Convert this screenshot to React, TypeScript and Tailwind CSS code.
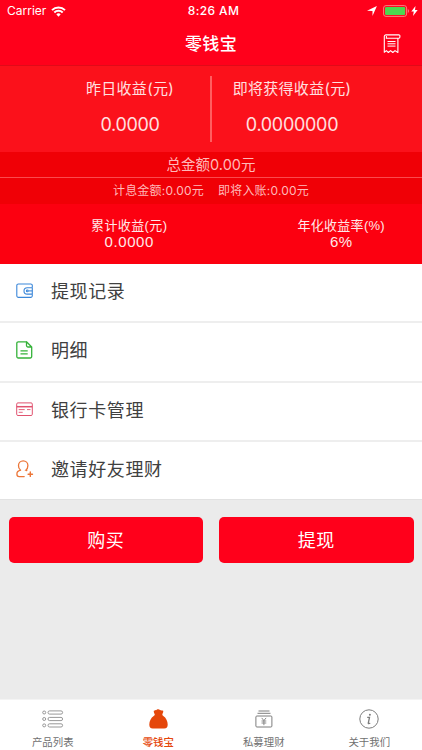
import type { ReactNode } from 'react';

const WalletIcon = () => (
  <svg width="18" height="16" viewBox="0 0 18 16" fill="none" stroke="#3b87d9" strokeWidth="1.1">
    <path d="M16.3 4.6V2.6a1.6 1.6 0 0 0-1.6-1.6H2.4A1.6 1.6 0 0 0 .8 2.6v10.2a1.6 1.6 0 0 0 1.6 1.6h12.3a1.6 1.6 0 0 0 1.6-1.6v-1.6" />
    <path d="M16.5 4.7h-5.3a3.2 3.2 0 0 0 0 6.4h5.3M16.3 4.6v6.6" />
    <circle cx="11.3" cy="7.9" r="0.9" />
    <path d="M12.4 7.9h3.8" />
  </svg>
);

const FileIcon = () => (
  <svg width="17" height="18" viewBox="0 0 17 18" fill="none" stroke="#35b23a" strokeWidth="1.3" strokeLinejoin="round">
    <path d="M10.5.8H2.3A1.5 1.5 0 0 0 .8 2.3v13.2A1.5 1.5 0 0 0 2.3 17h11.9a1.5 1.5 0 0 0 1.5-1.5V6L10.5.8v3.7A1.5 1.5 0 0 0 12 6h3.7" />
    <path d="M4.5 9.8h7.2M4.5 12.8h7.2" />
  </svg>
);

const CardIcon = () => (
  <svg width="18" height="15" viewBox="0 0 18 15" fill="none" stroke="#e0526f" strokeWidth="1">
    <rect x="0.7" y="0.9" width="15.6" height="12.6" rx="1.2" />
    <path d="M.7 4.7h15.6" strokeWidth="1.5" />
    <path d="M2.7 7.6h6M11 7.6h3.5M2.7 10.3h4" strokeWidth="0.9" />
  </svg>
);

const InviteIcon = () => (
  <svg width="18" height="18" viewBox="0 0 18 18" fill="none" stroke="#ec7638" strokeWidth="1.3" strokeLinecap="round">
    <path d="M4.600 10.200A5.300 5.300 0 0 1 2.500 5.500a4.700 4.700 0 0 1 9.400 0c0 2-.7 3.700-2.100 4.700l1 .4M4.600 10.200C2 10.800.9 12.200.9 14c0 1.800.8 2.600 2.300 2.600h5" />
    <path d="M14.3 12v4.4M12.1 14.2h4.4" strokeWidth="1.4" />
  </svg>
);

const ReceiptIcon = () => (
  <svg width="18" height="20" viewBox="0 0 18 20" fill="none" stroke="#fff" strokeWidth="1.1" strokeLinejoin="round">
    <path d="M2.8 4.2h13a1.1 1.1 0 0 0 1.1-1.1V2A1.1 1.1 0 0 0 15.800.9H3A1.7 1.7 0 0 0 1.300 2.600v15.700l2-1.700 2.100 1.900 2.200-1.900 2.200 1.900 2.200-1.900 2.900 1.900V4.200" />
    <path d="M3.4 2v2.2M4.5 7.5h8M4.5 9.8h8M4.5 12.1h8" strokeWidth="1" />
  </svg>
);

const ListIcon = () => (
  <svg width="22" height="18" viewBox="0 0 22 18" fill="none" stroke="#8c8c8c" strokeWidth="0.9">
    {[2.5, 9, 15.4].map((y) => (
      <g key={y}>
        <circle cx="2.2" cy={y} r="1.5" />
        <rect x="6" y={y - 1.6} width="14.6" height="3.2" rx="1.6" />
      </g>
    ))}
  </svg>
);

const BagIcon = () => (
  <svg width="19" height="20" viewBox="0 0 19 20" fill="#e5470b">
    <path d="M4.8 1.7C6 1.2 6.9 1.7 7.7.8 8.6.2 10 .2 11 .9c.9.6 2.4.2 3.2.9.3 1.4-.4 2.3-.8 3.4-.2.8.2 1.2.9 1.7C17 8.700 18.700 12 18.700 15.500c0 2.800-1 3.900-3.500 3.900H3.800C1.300 19.400.3 18.300.3 15.500.3 12 2 8.700 4.700 6.900c.8-.5 1.200-.9 1-1.700C5.300 4.100 4.500 3.100 4.800 1.700Z" />
  </svg>
);

const FundIcon = () => (
  <svg width="18" height="18" viewBox="0 0 18 18" fill="none" stroke="#7d7d7d" strokeWidth="1">
    <path d="M3.5 1h11M2.5 3.3h13" />
    <rect x="0.9" y="6" width="16" height="11" rx="1" />
    <path d="m6.7 7.9 2.2 2.7 2.2-2.7M8.9 10.6v4.6M6.5 11h4.8M6.5 13h4.8" strokeWidth="0.9" />
  </svg>
);

const AboutIcon = () => (
  <svg width="20" height="20" viewBox="0 0 20 20" fill="none" stroke="#7d7d7d" strokeWidth="1">
    <circle cx="10" cy="10" r="9.2" />
    <path d="M8.200 8.300h2.300L9.300 14c-.2.900.8.900 1.900 0" strokeWidth="1.3" />
    <circle cx="10.9" cy="5.7" r="1" fill="#7d7d7d" stroke="none" />
  </svg>
);

const menu: { label: string; icon: ReactNode }[] = [
  { label: '提现记录', icon: <WalletIcon /> },
  { label: '明细', icon: <FileIcon /> },
  { label: '银行卡管理', icon: <CardIcon /> },
  { label: '邀请好友理财', icon: <InviteIcon /> },
];

const tabs: { label: string; icon: ReactNode; active?: boolean }[] = [
  { label: '产品列表', icon: <ListIcon /> },
  { label: '零钱宝', icon: <BagIcon />, active: true },
  { label: '私募理财', icon: <FundIcon /> },
  { label: '关于我们', icon: <AboutIcon /> },
];

function StatusBar() {
  return (
    <div className="grid h-[22px] grid-cols-3 items-center pr-1 pl-[7px] text-[12px] leading-none">
      <div className="flex items-center gap-[5px]">
        <span>Carrier</span>
        <svg width="15" height="11" viewBox="0 0 15 11" fill="none" stroke="#fff" strokeWidth="2">
          <path d="M1 4.1a9.3 9.3 0 0 1 13 0M3.3 6.5a6 6 0 0 1 8.4 0" />
          <path d="m7.500 10.700-2.200-2.400a3.200 3.200 0 0 1 4.400 0Z" fill="#fff" stroke="none" />
        </svg>
      </div>
      <span className="pl-0.5 text-center font-medium tracking-[0.4px] whitespace-nowrap">8:26 AM</span>
      <div className="flex items-center justify-end">
        <svg className="mr-1.5" width="10" height="10" viewBox="0 0 10 10" fill="#fff">
          <path d="M9.9 0 5.5 9.9V4.9L0 4.7Z" />
        </svg>
        <svg width="27" height="12" viewBox="0 0 27 12">
          <rect x="0.6" y="0.6" width="23" height="10.8" rx="2.4" fill="none" stroke="#ff7880" strokeWidth="1" />
          <rect x="2" y="2" width="20.2" height="8" rx="1.2" fill="#4cd650" />
          <path d="M24.8 4v4c1.6-.5 1.6-3.5 0-4Z" fill="#ff7880" />
        </svg>
        <svg className="ml-px" width="7" height="10" viewBox="0 0 7 10" fill="#fff">
          <path d="M4.5 0 .3 5.6h2.5L2 10l4.7-6H4Z" />
        </svg>
      </div>
    </div>
  );
}

export default function App() {
  return (
    <div className="flex h-[750px] w-[422px] flex-col overflow-hidden bg-[#ebebeb] font-['Inter','Noto_Sans_CJK_SC',sans-serif] text-white">
      <header className="h-[66px] shrink-0 border-b border-[#e00a18] bg-[#ff001b]">
        <StatusBar />
        <div className="grid h-[43px] grid-cols-3 items-center">
          <h1 className="col-start-2 pt-0.5 text-center text-[17px] leading-none font-medium tracking-[0.4px]">零钱宝</h1>
          <div className="flex justify-end pr-[21px]">
            <ReceiptIcon />
          </div>
        </div>
      </header>

      <section className="flex h-[86px] shrink-0 bg-[#fb111b] pt-[10px] text-[#ffe0e0]">
        <div className="w-[210px] pt-1 pl-[50px] text-center">
          <div className="text-[15px] leading-[18px] tracking-[0.3px]">昨日收益(元)</div>
          <div className="mt-4 text-[18px] leading-[22px] tracking-[-0.3px]">0.0000</div>
        </div>
        <div className="h-[66px] w-0.5 bg-[#ff5e60]" />
        <div className="w-[160px] pt-1 text-center">
          <div className="text-[15px] leading-[18px] tracking-[0.3px]">即将获得收益(元)</div>
          <div className="mt-4 text-[18px] leading-[22px] tracking-[-0.3px]">0.0000000</div>
        </div>
      </section>

      <section className="h-[52px] shrink-0 bg-[#f00006] text-center text-[#ffb9b9]">
        <div className="h-[26px] border-b border-[#fb4a4d] text-[14.5px] leading-[26px]">总金额0.00元</div>
        <div className="flex h-[26px] justify-center gap-3.5 text-[12px] leading-[26px] tracking-[0.2px]">
          <span>计息金额:0.00元</span>
          <span>即将入账:0.00元</span>
        </div>
      </section>

      <section className="flex h-[60px] shrink-0 justify-between bg-[#fc0010] pt-[14px] pr-[37px] pl-[91px] text-center font-['Liberation_Sans','Noto_Sans_CJK_SC',sans-serif] text-[#ffe8e8]">
        <div>
          <div className="text-[13px] leading-4 tracking-[0.4px]">累计收益(元)</div>
          <div className="text-[15px] leading-4 tracking-[0.6px]">0.0000</div>
        </div>
        <div>
          <div className="text-[13px] leading-4 tracking-[0.3px]">年化收益率(%)</div>
          <div className="text-[15px] leading-4 tracking-[0.3px]">6%</div>
        </div>
      </section>

      <ul className="flex h-[236px] shrink-0 flex-col divide-y-2 divide-[#eeeeee] border-b border-[#e2e2e2] bg-white text-[#404040]">
        {menu.map((item) => (
          <li key={item.label} className="flex flex-1 items-center pb-[3px] pl-4">
            <span className="w-[35px]">{item.icon}</span>
            <span className="pt-0.5 text-[18px] leading-none tracking-[0.6px]">{item.label}</span>
          </li>
        ))}
      </ul>

      <div className="grid flex-1 grid-cols-2 content-start gap-4 px-[8.5px] pt-[16.5px]">
        <button className="h-[46px] rounded-[5px] bg-[#ff001b] pt-0.5 text-[18px] tracking-[0.5px]">购买</button>
        <button className="h-[46px] rounded-[5px] bg-[#ff001b] pt-0.5 text-[18px] tracking-[0.5px]">提现</button>
      </div>

      <nav className="grid h-[51px] shrink-0 grid-cols-4 border-t border-[#f4f4f4] bg-white text-[#707070]">
        {tabs.map((tab) => (
          <a key={tab.label} className="flex flex-col items-center pt-[9px]">
            <span className="flex h-5 items-center">{tab.icon}</span>
            <span className={tab.active ? 'mt-2 text-[10.4px] leading-3 font-medium text-[#e5470b]' : 'mt-2 text-[10.4px] leading-3'}>
              {tab.label}
            </span>
          </a>
        ))}
      </nav>
    </div>
  );
}
